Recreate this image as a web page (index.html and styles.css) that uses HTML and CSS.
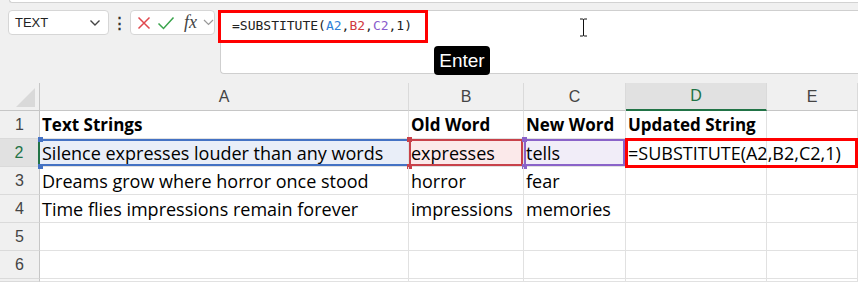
FILE: index.html
```html
<!DOCTYPE html>
<html lang="en">
<head>
    <meta charset="UTF-8">
    <title>SUBSTITUTE</title>
    <link rel="stylesheet" href="styles.css">
</head>
<body>
    <div class="top-strip"></div>

    <div class="toolbar">
        <div class="name-box">
            <span>TEXT</span>
            <svg width="12" height="8" viewBox="0 0 12 8"><polyline points="1.5,1.5 6,6 10.5,1.5" fill="none" stroke="#444" stroke-width="1.4"/></svg>
        </div>
        <div class="dots">⋮</div>
        <div class="fx-box">
            <svg width="14" height="14" viewBox="0 0 14 14"><path d="M1.5 1.5 L12.5 12.5 M12.5 1.5 L1.5 12.5" stroke="#e0484e" stroke-width="1.5"/></svg>
            <svg width="18" height="16" viewBox="0 0 18 16"><polyline points="1.5,8.5 6.5,13.5 16.5,2.5" fill="none" stroke="#3aa44c" stroke-width="1.5"/></svg>
            <span class="fx">fx</span>
            <svg width="11" height="7" viewBox="0 0 11 7"><polyline points="1,1 5.5,5.5 10,1" fill="none" stroke="#999" stroke-width="1.2"/></svg>
        </div>
        <div class="formula-bar">
            <span class="formula">=SUBSTITUTE(<span class="ref-a">A2</span>,<span class="ref-b">B2</span>,<span class="ref-c">C2</span>,1)</span>
        </div>
    </div>

    <div class="sheet">
        <div class="corner"><div class="tri"></div></div>
        <div class="col-head">A</div>
        <div class="col-head">B</div>
        <div class="col-head">C</div>
        <div class="col-head active">D</div>
        <div class="col-head">E</div>

        <div class="row-head">1</div>
        <div class="cell bold">Text Strings</div>
        <div class="cell bold">Old Word</div>
        <div class="cell bold">New Word</div>
        <div class="cell bold">Updated String</div>
        <div class="cell"></div>

        <div class="row-head active">2</div>
        <div class="cell hl-a">Silence expresses louder than any words</div>
        <div class="cell hl-b">expresses</div>
        <div class="cell hl-c">tells</div>
        <div class="cell">=SUBSTITUTE(A2,B2,C2,1)</div>
        <div class="cell"></div>

        <div class="row-head">3</div>
        <div class="cell">Dreams grow where horror once stood</div>
        <div class="cell">horror</div>
        <div class="cell">fear</div>
        <div class="cell"></div>
        <div class="cell"></div>

        <div class="row-head">4</div>
        <div class="cell">Time flies impressions remain forever</div>
        <div class="cell">impressions</div>
        <div class="cell">memories</div>
        <div class="cell"></div>
        <div class="cell"></div>

        <div class="row-head">5</div>
        <div class="cell"></div><div class="cell"></div><div class="cell"></div><div class="cell"></div><div class="cell"></div>

        <div class="row-head">6</div>
        <div class="cell"></div><div class="cell"></div><div class="cell"></div><div class="cell"></div><div class="cell"></div>

        <div class="row-head"></div>
        <div class="cell"></div><div class="cell"></div><div class="cell"></div><div class="cell"></div><div class="cell"></div>
    </div>

    <!-- callouts drawn over the screenshot -->
    <div class="mark mark-bar"></div>
    <div class="mark mark-cell"></div>
    <div class="key-tip">Enter</div>
    <svg class="ibeam" width="9" height="19" viewBox="0 0 9 19"><path d="M1 1 H3.5 Q4.5 1 4.5 2 V17 Q4.5 18 3.5 18 H1 M8 1 H5.5 Q4.5 1 4.5 2 M4.5 17 Q4.5 18 5.5 18 H8" fill="none" stroke="#111" stroke-width="1"/></svg>
</body>
</html>
```

FILE: styles.css
```css
body {
    margin: 0;
    background-color: #f0f0f0;
    font-family: "Liberation Sans", Arial, sans-serif;
    width: 858px;
    height: 282px;
    overflow: hidden;
    position: relative;
}
.top-strip {
    height: 2px;
    margin-left: 9px;
    background-color: white;
    border-bottom: 1px solid #d2d2d2;
    border-left: 1px solid #d2d2d2;
    border-bottom-left-radius: 4px;
}
.toolbar {
    display: flex;
    align-items: flex-start;
    padding-top: 7px;
    height: 73px;
    box-sizing: border-box;
}
.name-box {
    margin-left: 8px;
    width: 101px;
    height: 25px;
    box-sizing: border-box;
    background-color: white;
    border: 1px solid #d6d6d6;
    border-radius: 4px;
    display: flex;
    align-items: center;
    justify-content: space-between;
    padding: 0 7px 0 6px;
    font-size: 13px;
    color: #222;
}
.dots {
    width: 21px;
    text-align: center;
    font-size: 15px;
    line-height: 25px;
    color: #333;
    font-weight: bold;
}
.fx-box {
    width: 85px;
    height: 25px;
    box-sizing: border-box;
    background-color: white;
    border: 1px solid #d6d6d6;
    border-radius: 4px;
    display: flex;
    align-items: center;
    padding-left: 6px;
    gap: 6px;
}
.fx {
    font-family: "Liberation Serif", serif;
    font-style: italic;
    font-size: 18px;
    color: #444;
    margin-left: 3px;
}
.formula-bar {
    margin-left: 5px;
    flex-grow: 1;
    height: 64px;
    box-sizing: border-box;
    background-color: white;
    border: 1px solid #cfcfcf;
    border-right: none;
    border-radius: 4px 0 0 4px;
    padding: 5px 0 0 11px;
}
.formula {
    font-family: "DejaVu Sans Mono", "Liberation Mono", monospace;
    font-size: 13px;
    color: #222;
    line-height: 18px;
}
.ref-a { color: #2f7fd6; }
.ref-b { color: #d0393f; }
.ref-c { color: #8a5ccc; }

.sheet {
    margin-top: 7px;
    display: grid;
    grid-template-columns: 40px 369px 115px 102px 141px 91px;
    grid-template-rows: 28px repeat(6, 28px) 3px;
    background-color: white;
}
.corner {
    background-color: #f0f0f0;
    border-right: 1px solid #c6c6c6;
    border-bottom: 1px solid #c6c6c6;
    position: relative;
}
.tri {
    position: absolute;
    right: 4px;
    bottom: 3px;
    width: 0;
    height: 0;
    border-left: 19px solid transparent;
    border-bottom: 19px solid #d9d9d9;
}
.col-head {
    background-color: #f0f0f0;
    border-right: 1px solid #dadada;
    border-bottom: 1px solid #c6c6c6;
    text-align: center;
    font-size: 16px;
    line-height: 27px;
    color: #444;
}
.col-head.active {
    background-color: #e1e1e1;
    color: #217346;
    border-bottom: 2px solid #217346;
    line-height: 26px;
}
.row-head {
    background-color: #f0f0f0;
    border-right: 1px solid #c6c6c6;
    border-bottom: 1px solid #dadada;
    text-align: center;
    font-size: 16px;
    line-height: 28px;
    color: #444;
}
.row-head.active {
    background-color: #e1e1e1;
    color: #217346;
    border-right: 2px solid #217346;
}
.cell {
    border-right: 1px solid #e1e1e1;
    border-bottom: 1px solid #e1e1e1;
    font-family: "Open Sans", "Liberation Sans", sans-serif;
    font-size: 18px;
    color: #000;
    line-height: 28px;
    padding-left: 2px;
    white-space: nowrap;
    overflow: visible;
    position: relative;
}
.cell.bold {
    font-weight: bold;
    font-size: 17px;
}
.hl-a {
    background-color: #e9eef8;
    box-shadow: inset 0 2px 0 #4472c4, inset 0 -2px 0 #4472c4;
}
.hl-b {
    background-color: #fbe9ea;
    box-shadow: inset 0 0 0 2px #c8414a;
}
.hl-c {
    background-color: #f1edf8;
    box-shadow: inset 0 0 0 2px #8a63c9;
}
.hl-a::before, .hl-a::after,
.hl-b::before, .hl-b::after,
.hl-c::before, .hl-c::after {
    content: "";
    position: absolute;
    left: -2px;
    width: 5px;
    height: 5px;
}
.hl-a::before, .hl-b::before, .hl-c::before { top: -2px; }
.hl-a::after, .hl-b::after, .hl-c::after { bottom: -3px; }
.hl-a::before, .hl-a::after { background-color: #4472c4; }
.hl-b::before, .hl-b::after { background-color: #c8414a; }
.hl-c::before, .hl-c::after { background-color: #8a63c9; }

.mark {
    position: absolute;
    border: 3px solid #ff0000;
    box-sizing: border-box;
}
.mark-bar {
    left: 218px;
    top: 10px;
    width: 210px;
    height: 33px;
}
.mark-cell {
    left: 625px;
    top: 138px;
    width: 233px;
    height: 30px;
}
.key-tip {
    position: absolute;
    left: 434px;
    top: 46px;
    width: 56px;
    height: 29px;
    box-sizing: border-box;
    background-color: black;
    border-radius: 4px;
    color: white;
    font-size: 19px;
    line-height: 29px;
    text-align: center;
}
.ibeam {
    position: absolute;
    left: 579px;
    top: 18px;
}
```
